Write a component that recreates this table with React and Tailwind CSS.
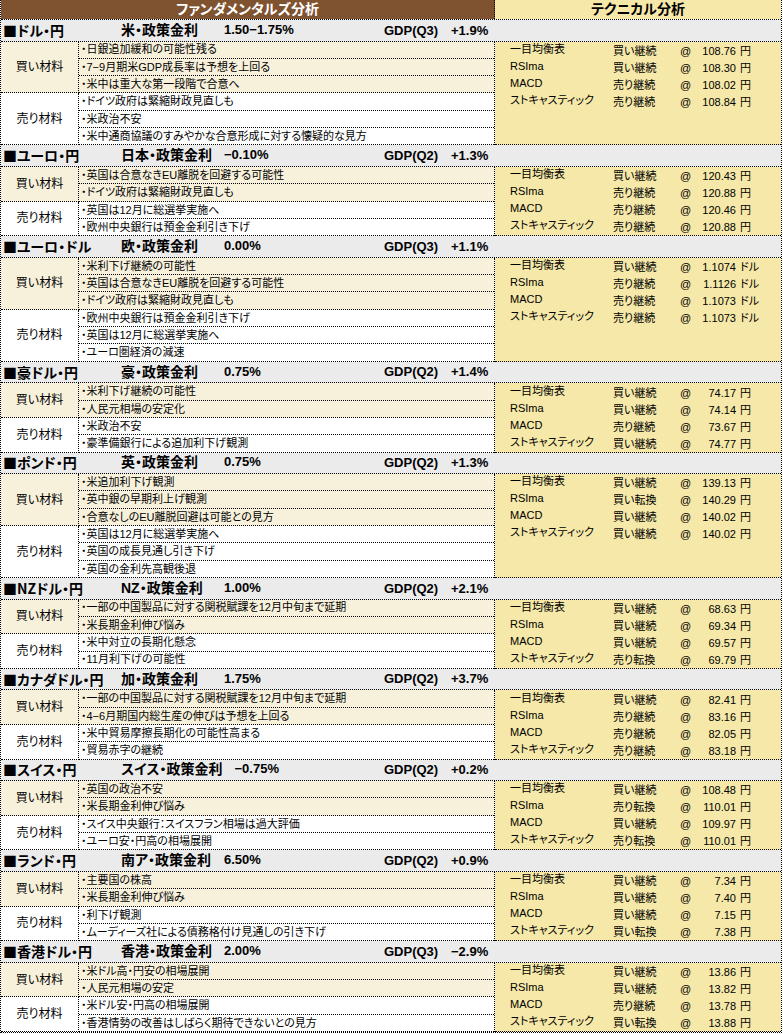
import React from 'react';

const sections = [
  {
    pair: '■ドル・円', rateLabel: '米・政策金利', rate: '1.50−1.75%', gdp: 'GDP(Q3)', gdpValue: '+1.9%', unit: '円',
    buy: ['・日銀追加緩和の可能性残る', '・7−9月期米GDP成長率は予想を上回る', '・米中は重大な第一段階で合意へ'],
    sell: ['・ドイツ政府は緊縮財政見直しも', '・米政治不安', '・米中通商協議のすみやかな合意形成に対する懐疑的な見方'],
    tech: [['買い継続', '108.76'], ['買い継続', '108.30'], ['売り継続', '108.02'], ['売り継続', '108.84']],
  },
  {
    pair: '■ユーロ・円', rateLabel: '日本・政策金利', rate: '−0.10%', gdp: 'GDP(Q2)', gdpValue: '+1.3%', unit: '円',
    buy: ['・英国は合意なきEU離脱を回避する可能性', '・ドイツ政府は緊縮財政見直しも'],
    sell: ['・英国は12月に総選挙実施へ', '・欧州中央銀行は預金金利引き下げ'],
    tech: [['買い継続', '120.43'], ['売り継続', '120.88'], ['売り継続', '120.46'], ['売り継続', '120.88']],
  },
  {
    pair: '■ユーロ・ドル', rateLabel: '欧・政策金利', rate: '0.00%', gdp: 'GDP(Q3)', gdpValue: '+1.1%', unit: 'ドル',
    buy: ['・米利下げ継続の可能性', '・英国は合意なきEU離脱を回避する可能性', '・ドイツ政府は緊縮財政見直しも'],
    sell: ['・欧州中央銀行は預金金利引き下げ', '・英国は12月に総選挙実施へ', '・ユーロ圏経済の減速'],
    tech: [['買い継続', '1.1074'], ['売り継続', '1.1126'], ['売り継続', '1.1073'], ['売り継続', '1.1073']],
  },
  {
    pair: '■豪ドル・円', rateLabel: '豪・政策金利', rate: '0.75%', gdp: 'GDP(Q2)', gdpValue: '+1.4%', unit: '円',
    buy: ['・米利下げ継続の可能性', '・人民元相場の安定化'],
    sell: ['・米政治不安', '・豪準備銀行による追加利下げ観測'],
    tech: [['買い継続', '74.17'], ['買い継続', '74.14'], ['売り継続', '73.67'], ['買い継続', '74.77']],
  },
  {
    pair: '■ポンド・円', rateLabel: '英・政策金利', rate: '0.75%', gdp: 'GDP(Q2)', gdpValue: '+1.3%', unit: '円',
    buy: ['・米追加利下げ観測', '・英中銀の早期利上げ観測', '・合意なしのEU離脱回避は可能との見方'],
    sell: ['・英国は12月に総選挙実施へ', '・英国の成長見通し引き下げ', '・英国の金利先高観後退'],
    tech: [['買い継続', '139.13'], ['買い転換', '140.29'], ['買い継続', '140.02'], ['買い継続', '140.02']],
  },
  {
    pair: '■NZドル・円', rateLabel: 'NZ・政策金利', rate: '1.00%', gdp: 'GDP(Q2)', gdpValue: '+2.1%', unit: '円',
    buy: ['・一部の中国製品に対する関税賦課を12月中旬まで延期', '・米長期金利伸び悩み'],
    sell: ['・米中対立の長期化懸念', '・11月利下げの可能性'],
    tech: [['買い継続', '68.63'], ['買い継続', '69.34'], ['買い継続', '69.57'], ['売り転換', '69.79']],
  },
  {
    pair: '■カナダドル・円', rateLabel: '加・政策金利', rate: '1.75%', gdp: 'GDP(Q2)', gdpValue: '+3.7%', unit: '円',
    buy: ['・一部の中国製品に対する関税賦課を12月中旬まで延期', '・4−6月期国内総生産の伸びは予想を上回る'],
    sell: ['・米中貿易摩擦長期化の可能性高まる', '・貿易赤字の継続'],
    tech: [['買い継続', '82.41'], ['売り継続', '83.16'], ['売り継続', '82.05'], ['売り継続', '83.18']],
  },
  {
    pair: '■スイス・円', rateLabel: 'スイス・政策金利', rate: '−0.75%', gdp: 'GDP(Q2)', gdpValue: '+0.2%', unit: '円',
    buy: ['・英国の政治不安', '・米長期金利伸び悩み'],
    sell: ['・スイス中央銀行：スイスフラン相場は過大評価', '・ユーロ安・円高の相場展開'],
    tech: [['買い継続', '108.48'], ['売り転換', '110.01'], ['買い継続', '109.97'], ['売り転換', '110.01']],
  },
  {
    pair: '■ランド・円', rateLabel: '南ア・政策金利', rate: '6.50%', gdp: 'GDP(Q2)', gdpValue: '+0.9%', unit: '円',
    buy: ['・主要国の株高', '・米長期金利伸び悩み'],
    sell: ['・利下げ観測', '・ムーディーズ社による債務格付け見通しの引き下げ'],
    tech: [['買い継続', '7.34'], ['買い継続', '7.40'], ['買い継続', '7.15'], ['買い転換', '7.38']],
  },
  {
    pair: '■香港ドル・円', rateLabel: '香港・政策金利', rate: '2.00%', gdp: 'GDP(Q3)', gdpValue: '−2.9%', unit: '円',
    buy: ['・米ドル高・円安の相場展開', '・人民元相場の安定'],
    sell: ['・米ドル安・円高の相場展開', '・香港情勢の改善はしばらく期待できないとの見方'],
    tech: [['買い継続', '13.86'], ['買い継続', '13.82'], ['売り継続', '13.78'], ['買い転換', '13.88']],
  },
];

const indicators = ['一目均衡表', 'RSIma', 'MACD', 'ストキャスティック'];

function Group({ label, items, bg }) {
  return (
    <div className={`flex ${bg}`}>
      <div className="w-[78px] shrink-0 border-r border-b border-dotted border-black flex items-center justify-center text-[12px]">
        {label}
      </div>
      <div className="flex-1">
        {items.map((item, i) => (
          <div key={i} className="h-[17.33px] border-b border-dotted border-black flex items-center pl-[2px] text-[11px] whitespace-nowrap overflow-hidden">
            {item}
          </div>
        ))}
      </div>
    </div>
  );
}

function Section({ s }) {
  return (
    <div>
      {/* Section header */}
      <div className="h-[21.5px] bg-[#ebebeb] border-b border-dotted border-black flex items-center font-bold text-[14px] whitespace-nowrap">
        <span className="w-[120px] pl-[2px] shrink-0 font-['Noto_Sans_CJK_JP',sans-serif]">{s.pair}</span>
        <span className="w-[263px] shrink-0 flex gap-3">
          <span className="min-w-[91px]">{s.rateLabel}</span>
          <span className="text-[13px]">{s.rate}</span>
        </span>
        <span className="w-[67px] shrink-0 text-[13px]">{s.gdp}</span>
        <span className="text-[13px]">{s.gdpValue}</span>
      </div>

      <div className="flex">
        <div className="w-[494px] shrink-0 border-r border-dotted border-black">
          <Group label="買い材料" items={s.buy} bg="bg-[#f7f1dc]" />
          <Group label="売り材料" items={s.sell} bg="bg-white" />
        </div>
        <div className="flex-1 bg-[#f5e8a8] border-b border-dotted border-black text-[11px]">
          {s.tech.map(([signal, price], i) => (
            <div key={i} className="h-[17px] flex items-center pl-[15px] whitespace-nowrap">
              <span className="w-[103px] shrink-0 pb-[2px]">{indicators[i]}</span>
              <span className="w-[67px] shrink-0 pt-[2px]">{signal}</span>
              <span className="w-[16px] shrink-0 pt-[2px]">@</span>
              <span className="w-[40px] shrink-0 pt-[2px] text-right">{price}</span>
              <span className="pl-[4px] pt-[2px]">{s.unit}</span>
            </div>
          ))}
        </div>
      </div>
    </div>
  );
}

export default function App() {
  return (
    <div className="bg-white min-h-screen font-['Liberation_Sans','Noto_Sans_CJK_JP',sans-serif] [font-feature-settings:'palt']">
      <div className="w-[782px] border-l border-r border-b border-dotted border-black text-black">
        {/* Top header */}
        <div className="h-[20px] flex border-b border-dotted border-black font-bold text-[14px]">
          <div className="w-[494px] shrink-0 bg-[#7f5330] border-r border-dotted border-black text-white flex items-center justify-center">
            ファンダメンタルズ分析
          </div>
          <div className="flex-1 bg-[#f5e8a8] flex items-center justify-center">
            テクニカル分析
          </div>
        </div>

        {sections.map((s, i) => (
          <Section key={i} s={s} />
        ))}
      </div>
    </div>
  );
}
